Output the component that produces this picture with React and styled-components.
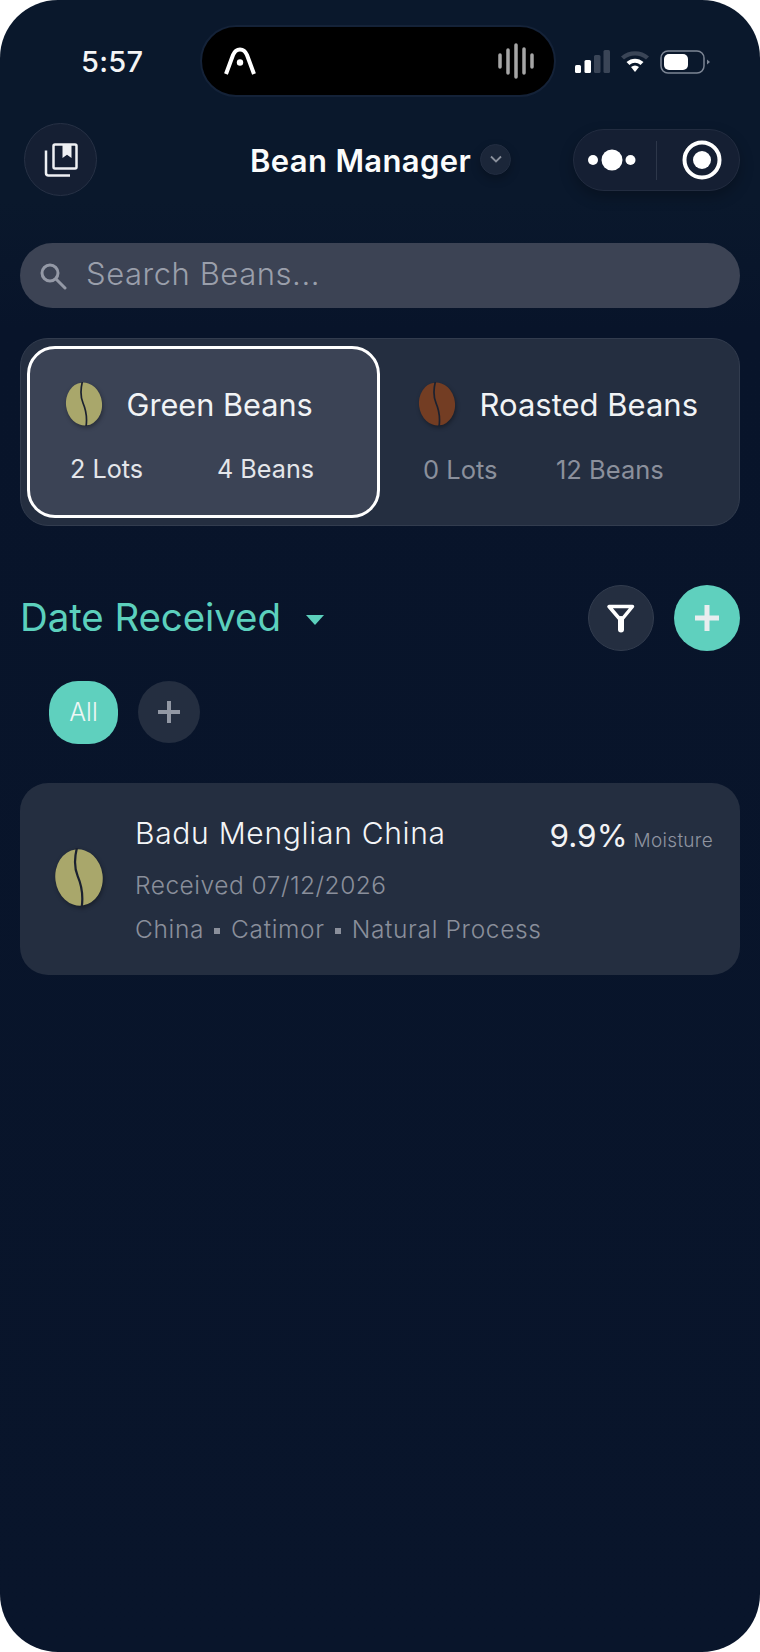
import React from "react";
import styled, { createGlobalStyle } from "styled-components";

const Global = createGlobalStyle`
  html, body { margin: 0; padding: 0; background: #fff; }
  * { box-sizing: border-box; }
  body { font-family: Inter, "Liberation Sans", sans-serif; }
`;

const Phone = styled.div`
  width: 760px; height: 1652px; overflow: hidden; border-radius: 58px;
  background: linear-gradient(180deg, #0a182c 0px, #0a182c 200px, #08142a 330px, #09152b 100%);
  display: flex; flex-direction: column;
`;
const StatusBar = styled.div`
  height: 123px; padding: 25px 0 0 81px; display: flex; align-items: flex-start; flex: none;
`;
const Time = styled.div`
  width: 119px; height: 73px; display: flex; align-items: center;
  font-size: 29px; font-weight: 500; color: #f4f5f6; letter-spacing: 0.3px;
`;
const Island = styled.div`
  width: 356px; height: 72px; border-radius: 36px; background: #000; border: 2px solid #142238;
  display: flex; align-items: center; justify-content: space-between; padding: 0 20px 0 21px;
`;
const StatusIcons = styled.div`
  margin-left: 19px; height: 73px; display: flex; align-items: center; gap: 10px;
`;
const Header = styled.div`
  height: 120px; padding: 0 20px 0 24px; display: flex; align-items: flex-start; flex: none; position: relative;
`;
const LibraryBtn = styled.div`
  width: 73px; height: 73px; border-radius: 50%; background: #151f33; border: 1.5px solid #273145;
  display: flex; align-items: center; justify-content: center;
`;
const TitleWrap = styled.div`
  flex: 1; display: flex; align-items: center; height: 74px; padding-left: 153px; gap: 9px;
`;
const Title = styled.div`
  font-size: 31px; font-weight: 600; color: #fbfcfc; letter-spacing: 0.35px; white-space: nowrap;
`;
const Caret = styled.div`
  width: 31px; height: 31px; border-radius: 50%; background: #1b2639; border: 1px solid #222d41;
  display: flex; align-items: center; justify-content: center; box-shadow: 0 4px 10px rgba(0,0,0,.25); margin-top: -2px;
`;
const Capsule = styled.div`
  width: 167px; height: 62px; margin-top: 6px; border-radius: 31px; background: #151f33; border: 1.5px solid #222c40;
  display: flex; align-items: center; box-shadow: 0 6px 14px rgba(0,0,0,.25);
`;
const CapsuleSide = styled.div`
  flex: 1; display: flex; align-items: center; justify-content: center; height: 100%;
  transform: translateX(${p => p.$shift}px);
`;
const CapsuleDivider = styled.div`
  width: 1.5px; height: 39px; background: #2d374a; flex: none;
`;
const Search = styled.div`
  margin: 0 20px; height: 65px; border-radius: 33px; background: #3c4354; flex: none;
  display: flex; align-items: center; padding-left: 19px; gap: 19px;
`;
const SearchText = styled.div`
  font-size: 31px; font-weight: 300; color: #9a9fab; letter-spacing: 0.55px; margin-top: -4px;
`;
const TabGroup = styled.div`
  margin: 30px 20px 0; height: 188px; border-radius: 28px; background: #242e40; border: 1.5px solid #323c4e;
  padding: 7px 6px; display: flex; flex: none;
`;
const Tab = styled.div`
  width: ${p => p.$w}px; height: 172px; border-radius: 28px;
  background: ${p => p.$active ? "#3b4355" : "transparent"};
  border: 3.5px solid ${p => p.$active ? "#fff" : "transparent"};
  padding: 33px 0 0 ${p => p.$pl}px; flex: none;
`;
const TabHead = styled.div`
  display: flex; align-items: center; gap: ${p => p.$gap}px; height: 44px;
`;
const TabTitle = styled.div`
  font-size: ${p => p.$size}px; font-weight: 400; color: #f1f3f5; white-space: nowrap; margin-top: 1px;
`;
const TabStats = styled.div`
  display: flex; margin: 28px 0 0 ${p => p.$ml}px; height: 30px; align-items: center;
`;
const Stat = styled.div`
  font-size: ${p => p.$dim ? 25.5 : 25.2}px; font-weight: 400; color: ${p => p.$dim ? "#8b909c" : "#e4e6ea"};
  width: ${p => p.$w}px; white-space: nowrap;
`;
const Section = styled.div`
  margin: 59px 20px 0; height: 66px; display: flex; align-items: center; flex: none;
`;
const SectionTitle = styled.div`
  font-size: 38.5px; font-weight: 400; color: #5cd0bd; letter-spacing: -0.1px; white-space: nowrap;
  margin-top: -2px;
`;
const SortCaret = styled.div`
  width: 0; height: 0; margin-left: 25px; margin-top: 3px;
  border-left: 9.5px solid transparent; border-right: 9.5px solid transparent; border-top: 10px solid #5cd0bd;
`;
const Spacer = styled.div` flex: 1; `;
const RoundBtn = styled.div`
  width: 66px; height: 66px; border-radius: 50%; flex: none; margin-left: ${p => p.$ml || 0}px;
  background: ${p => p.$accent ? "#5fd0be" : "#242e40"};
  border: ${p => p.$accent ? "none" : "1.5px solid #323c4e"};
  display: flex; align-items: center; justify-content: center;
`;
const Chips = styled.div`
  margin: 30px 0 0 49px; display: flex; gap: 20px; flex: none;
`;
const Chip = styled.div`
  width: 69px; height: 63px; border-radius: 29px; background: #5fd0be; color: #eef6f5;
  font-size: 25px; font-weight: 300; display: flex; align-items: center; justify-content: center; padding-bottom: 2px;
`;
const AddChip = styled.div`
  width: 62px; height: 62px; border-radius: 50%; background: #242e40;
  display: flex; align-items: center; justify-content: center; padding-bottom: 1px;
`;
const Card = styled.div`
  margin: 39px 20px 0; height: 192px; border-radius: 28px; background: #242e40; flex: none;
  display: flex; padding: 0 27px 0 34px; position: relative;
`;
const CardBean = styled.div`
  width: 48px; flex: none; display: flex; align-items: center; margin-top: -3px;
`;
const CardBody = styled.div`
  margin-left: 33px; flex: 1; padding-top: 31px;
`;
const CardTitle = styled.div`
  font-size: 30px; font-weight: 300; color: #f4f5f7; letter-spacing: 0.7px; height: 38px; line-height: 38px; white-space: nowrap;
`;
const CardLine = styled.div`
  font-size: 24.5px; font-weight: 300; color: #8a8f9b; letter-spacing: ${p => p.$ls}px; height: 31px; line-height: 31px;
  margin-top: ${p => p.$mt}px; white-space: nowrap; display: flex; align-items: center;
`;
const Dot = styled.span`
  width: 6px; height: 6px; background: #8a8f9b; margin: 2px 11px 0 10px; flex: none;
`;
const Moisture = styled.div`
  padding-top: 33px; display: flex; align-items: baseline; gap: 6px; flex: none; white-space: nowrap; height: 70px;
`;
const MoistureValue = styled.span`
  font-size: 31.5px; font-weight: 400; color: #f2f3f5;
`;
const MoistureLabel = styled.span`
  font-size: 19px; font-weight: 300; color: #8f94a0; letter-spacing: 0.3px;
`;

const Bean = ({ fill, w = 38, h = 44 }) => (
  <svg width={w} height={h} viewBox="0 0 38 44" style={{ flex: "none", filter: "drop-shadow(1px 2px 2px rgba(0,0,0,.35))" }}>
    <ellipse cx="19" cy="22" rx="18" ry="21.500" transform="rotate(-7 19 22)" fill={fill} />
    <path d="M17.500 -1C15.500 7 15 14 18 21C21 28 22.500 35 21 45" fill="none" stroke="#1b2130" strokeWidth="1.700" />
  </svg>
);

export default function App() {
  return (
    <Phone>
      <Global />
      <StatusBar>
        <Time>5:57</Time>
        <Island>
          <svg width="34" height="30" viewBox="0 0 34 30">
            <path d="M3 28 L10 9 C13 1.500 21 1.500 24 9 L31 28" fill="none" stroke="#fff" strokeWidth="4" />
            <circle cx="17" cy="16.500" r="3.200" fill="#fff" />
          </svg>
          <svg width="36" height="36" viewBox="0 0 36 36" stroke="#a6a6a6" strokeWidth="3.500" strokeLinecap="round">
            <path d="M2 12V24M10 7V30M18 2V34M26 6V30M34 12V24" />
          </svg>
        </Island>
        <StatusIcons>
          <svg width="35" height="24" viewBox="0 0 35 24">
            <rect x="0" y="15" width="6" height="8" rx="1.500" fill="#fff" />
            <rect x="9.500" y="10" width="6.500" height="13" rx="1.500" fill="#fff" />
            <rect x="19" y="5" width="6.500" height="18" rx="1.500" fill="#3a4557" />
            <rect x="28.500" y="0" width="6.500" height="23" rx="1.500" fill="#3a4557" />
          </svg>
          <svg width="30" height="24" viewBox="0 0 30 24" style={{ marginTop: -2 }}>
            <path d="M1 7.500C8.500 .5 21.500 .5 29 7.500L26 10.500C20 5 10 5 4 10.500z" fill="#3a4557" />
            <path d="M6.500 13C11.500 8.500 18.500 8.500 23.500 13L20.500 16C17 13 13 13 9.500 16z" fill="#fff" />
            <path d="M11 18C13.500 16 16.500 16 19 18L15 23z" fill="#fff" />
          </svg>
          <svg width="50" height="24" viewBox="0 0 50 24">
            <rect x="1" y="1" width="43" height="22" rx="7" fill="none" stroke="#7c8594" strokeWidth="1.500" />
            <rect x="4" y="4" width="24" height="16" rx="5" fill="#fff" />
            <path d="M47 9.500 L50 12 L47 14.500z" fill="#7c8594" />
          </svg>
        </StatusIcons>
      </StatusBar>

      <Header>
        <LibraryBtn>
          <svg width="34" height="34" viewBox="0 0 34 34" fill="none">
            <path d="M2 7.500V30a2.500 2.500 0 0 0 2.500 2.500H26" stroke="#eef0f3" strokeWidth="2.500" />
            <rect x="9.500" y="1.500" width="23" height="24" rx="1.500" stroke="#eef0f3" strokeWidth="2.500" />
            <path d="M18.500 1.500H27.500V15L23 11.800 18.500 15z" fill="#eef0f3" />
          </svg>
        </LibraryBtn>
        <TitleWrap>
          <Title>Bean Manager</Title>
          <Caret>
            <svg width="14" height="9" viewBox="0 0 14 9" fill="none">
              <path d="M2 1.500L7 6.500 12 1.500" stroke="#8a909c" strokeWidth="1.800" />
            </svg>
          </Caret>
        </TitleWrap>
        <Capsule>
          <CapsuleSide $shift={-3}>
            <svg width="48" height="22" viewBox="0 0 48 22" fill="#fff">
              <circle cx="5" cy="11" r="5" />
              <circle cx="24" cy="11" r="10.500" />
              <circle cx="42.500" cy="11" r="5" />
            </svg>
          </CapsuleSide>
          <CapsuleDivider />
          <CapsuleSide $shift={4}>
            <svg width="40" height="40" viewBox="0 0 40 40" fill="none">
              <circle cx="20" cy="20" r="17.500" stroke="#fff" strokeWidth="4" />
              <circle cx="20" cy="20" r="9" fill="#fff" />
            </svg>
          </CapsuleSide>
        </Capsule>
      </Header>

      <Search>
        <svg width="28" height="28" viewBox="0 0 28 28" fill="none" stroke="#9499a6" strokeWidth="3">
          <circle cx="11" cy="11" r="8" />
          <path d="M17 17L26 26" strokeLinecap="round" />
        </svg>
        <SearchText>Search Beans...</SearchText>
      </Search>

      <TabGroup>
        <Tab $active $w={353} $pl={35}>
          <TabHead $gap={23.5}>
            <Bean fill="#a9a76b" />
            <TabTitle $size={30.7}>Green Beans</TabTitle>
          </TabHead>
          <TabStats $ml={5}>
            <Stat $w={147}>2 Lots</Stat>
            <Stat>4 Beans</Stat>
          </TabStats>
        </Tab>
        <Tab $w={348} $pl={35}>
          <TabHead $gap={23.5}>
            <Bean fill="#733d23" />
            <TabTitle $size={31}>Roasted Beans</TabTitle>
          </TabHead>
          <TabStats $ml={5}>
            <Stat $dim $w={133}>0 Lots</Stat>
            <Stat $dim>12 Beans</Stat>
          </TabStats>
        </Tab>
      </TabGroup>

      <Section>
        <SectionTitle>Date Received</SectionTitle>
        <SortCaret />
        <Spacer />
        <RoundBtn>
          <svg width="30" height="30" viewBox="0 0 30 30" fill="none" stroke="#fff" strokeWidth="4" strokeLinejoin="round">
            <path d="M3 3.500H26.500L15 17.500z" strokeWidth="3.500" />
            <path d="M15 16V26.500" strokeWidth="6" strokeLinecap="round" />
          </svg>
        </RoundBtn>
        <RoundBtn $accent $ml={20}>
          <svg width="24" height="26" viewBox="0 0 24 26" fill="#e9edef">
            <rect x="0" y="10.500" width="24" height="5" />
            <rect x="9.500" y="0" width="5" height="26" />
          </svg>
        </RoundBtn>
      </Section>

      <Chips>
        <Chip>All</Chip>
        <AddChip>
          <svg width="22" height="22" viewBox="0 0 22 22" fill="#9298a4">
            <rect x="0" y="9" width="22" height="4" />
            <rect x="9" y="0" width="4" height="22" />
          </svg>
        </AddChip>
      </Chips>

      <Card>
        <CardBean><Bean fill="#a9a76b" w={50} h={59} /></CardBean>
        <CardBody>
          <CardTitle>Badu Menglian China</CardTitle>
          <CardLine $mt={18} $ls={0.5}>Received 07/12/2026</CardLine>
          <CardLine $mt={13} $ls={0.65}>China<Dot />Catimor<Dot />Natural Process</CardLine>
        </CardBody>
        <Moisture>
          <MoistureValue>9.9%</MoistureValue>
          <MoistureLabel>Moisture</MoistureLabel>
        </Moisture>
      </Card>
    </Phone>
  );
}
